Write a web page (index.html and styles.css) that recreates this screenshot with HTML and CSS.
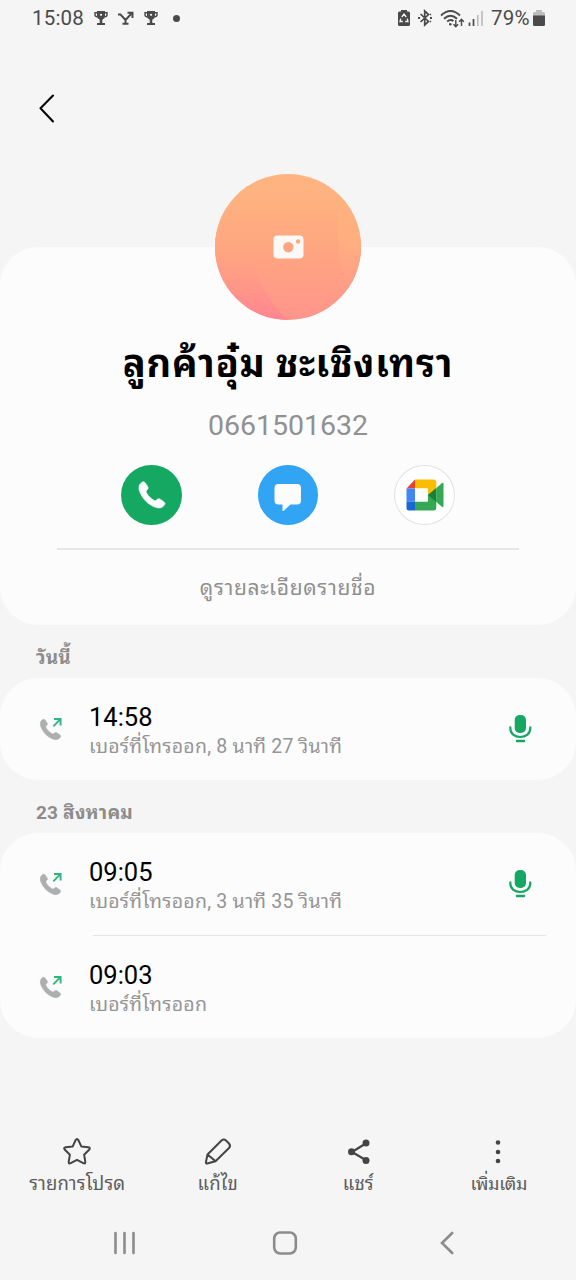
FILE: index.html
```html
<!DOCTYPE html>
<html lang="th">
<head>
<meta charset="utf-8">
<title>ลูกค้าอุ๋ม ชะเชิงเทรา</title>
<link rel="stylesheet" href="styles.css">
</head>
<body>
<svg class="defs" aria-hidden="true">
  <symbol id="trophy" viewBox="0 0 14 16">
    <path d="M3 1h8v5.500q0 2-2.700 3.300V13H11v2H3v-2h2.700V9.800Q3 8.500 3 6.500z" fill="#4a4a4a"/>
    <path d="M3 2.800H1V5q0 1.600 2.500 2M11 2.800h2V5q0 1.600-2.500 2" fill="none" stroke="#4a4a4a" stroke-width="1.400"/>
    <circle cx="7" cy="4.800" r="1.100" fill="#f5f5f5"/>
  </symbol>
  <symbol id="handset" viewBox="0 0 28 28">
    <path d="M2.900 2.200C4.700.300 6.200.500 7.300 2.100l2.200 3.200c1 1.500.700 2.600-.500 3.700-1 1-1.200 1.700-.400 3.100 1.500 2.800 4.300 5.600 7.200 7.200 1.300.700 2 .500 3-.500 1.100-1.200 2.200-1.400 3.700-.400l3.200 2.300c1.700 1.100 1.700 2.500-.100 4.200-2.400 2.300-5.200 2.700-9.400.900C9.500 22.800 5 18.200 2.100 11.600.300 7.400.600 4.500 2.900 2.200z" fill="currentColor" stroke="currentColor" stroke-width="0.700"/>
  </symbol>
  <symbol id="outgoing" viewBox="0 0 24 24">
    <use href="#handset" x="0.500" y="1.500" width="22" height="22" color="#acaeaf"/>
    <path d="M14.300 9.300 21.400 2.200M15 2h6.600v6.600" fill="none" stroke="#2fb67f" stroke-width="1.900"/>
  </symbol>
  <symbol id="mic" viewBox="0 0 24 30">
    <rect x="6.700" y="1" width="11.300" height="18" rx="5" fill="#15a862"/>
    <path d="M2.300 13.300v1c0 5.200 4.300 8.700 10 8.700s10-3.500 10-8.700v-1" fill="none" stroke="#15a862" stroke-width="2.200" stroke-linecap="round"/>
    <path d="M9 27h7" stroke="#15a862" stroke-width="2.500" stroke-linecap="round"/>
  </symbol>
</svg>

<div class="screen">
  <header class="status">
    <span class="clock">15:08</span>
    <svg class="trophy" width="14" height="16"><use href="#trophy"/></svg>
    <svg class="missed" width="18" height="16" viewBox="0 0 18 16"><path d="M1 4.500h2.500L8.500 10 15 3M10.500 2.800H15.500V8M8.500 10v3.300M5.500 13.800h6" fill="none" stroke="#4a4a4a" stroke-width="1.900"/></svg>
    <svg class="trophy" width="14" height="16"><use href="#trophy"/></svg>
    <span class="dot"></span>
    <div class="system">
      <svg width="14" height="18" viewBox="0 0 14 18"><path d="M4 1h6v1.500h1.500Q13 2.500 13 4v11.500q0 1.500-1.500 1.500h-9Q1 17 1 15.500V4q0-1.500 1.500-1.500H4z" fill="#4a4a4a"/><path d="M4.800 8 7 5l2.200 3M10.300 9.600l.7 2.900H8.200M5.800 12.500H3l.8-2.900" fill="none" stroke="#f5f5f5" stroke-width="1.300"/></svg>
      <svg class="bt" width="16" height="18" viewBox="0 0 16 18"><path d="m3.500 5 8 7.500L7.700 16V2l3.800 3.500-8 7.500" fill="none" stroke="#4a4a4a" stroke-width="1.700"/><path d="M1 9h2M13 9h2M13 5.800l1-.500M13 12.200l1 .500" stroke="#4a4a4a" stroke-width="1.800"/></svg>
      <svg class="wifi" width="25" height="19" viewBox="0 0 25 19"><path d="M1 6.500Q10.500-2.500 20 6.500M4 9.800Q10.500 3.500 17 9.800M7.200 12.500q3.300-2.800 6.300-.4" fill="none" stroke="#4a4a4a" stroke-width="1.900"/><circle cx="10.300" cy="15.200" r="1.300" fill="#4a4a4a"/><path d="M15.800 11v6.500M13.500 15.200l2.300 2.500 2.300-2.500M21.500 17v-6.500M19.200 12.800l2.300-2.500 2.300 2.500" fill="none" stroke="#4a4a4a" stroke-width="1.400"/></svg>
      <svg class="signal" width="16" height="17" viewBox="0 0 16 17"><path d="M1.500 12.500V16M5.500 9v7" stroke="#4a4a4a" stroke-width="1.700"/><path d="M9.800 5v11M14 1v15" stroke="#bdbdbd" stroke-width="1.700"/></svg>
      <span class="percent">79%</span>
      <svg class="batt" width="12" height="17" viewBox="0 0 12 17"><path d="M3 0h6v2h1.500Q12 2 12 3.500V6H0V3.500Q0 2 1.500 2H3z" fill="#bdbdbd"/><path d="M0 5.500h12v9q0 1.500-1.500 1.500h-9Q0 16 0 14.500z" fill="#4a4a4a"/></svg>
    </div>
  </header>

  <nav class="appbar">
    <svg width="18" height="30" viewBox="0 0 18 30"><path d="M15 2.500 2.500 15.300 15 28.500" fill="none" stroke="#080808" stroke-width="2.100" stroke-linecap="round" stroke-linejoin="round"/></svg>
  </nav>

  <section class="card profile">
    <svg class="avatar" width="146" height="146" viewBox="0 0 146 146">
      <defs>
        <linearGradient id="sunset" x1="0" y1="0" x2="0" y2="1"><stop offset=".12" stop-color="#ffb380"/><stop offset=".55" stop-color="#ffa481"/><stop offset="1" stop-color="#ff958c"/></linearGradient>
        <linearGradient id="rose" x1="0" y1="0" x2="0" y2="1"><stop offset=".12" stop-color="#ffb380"/><stop offset=".55" stop-color="#ffa481"/><stop offset=".78" stop-color="#ff9688"/><stop offset="1" stop-color="#ff8592"/></linearGradient>
        <linearGradient id="amber" x1="0" y1="0" x2="0" y2="1"><stop offset="0" stop-color="#ffb27e"/><stop offset=".5" stop-color="#ffae80"/><stop offset="1" stop-color="#ff9c87"/></linearGradient>
        <clipPath id="disc"><circle cx="73" cy="73" r="73"/></clipPath>
      </defs>
      <g clip-path="url(#disc)">
        <rect width="146" height="146" fill="url(#sunset)"/>
        <path d="M0 0h34C25 54 35 112 73 146H0z" fill="url(#rose)"/>
        <path d="M123 20q-3 58 9 96h14V20z" fill="url(#amber)"/>
      </g>
      <path fill-rule="evenodd" d="M62.500 61.500h22q4 0 4 4v15q0 4-4 4h-22q-4 0-4-4v-15q0-4 4-4zM73.300 68a5.200 5.200 0 1 0 .01 0zM83 65.300a2.200 2.200 0 1 0 .01 0z" fill="#fdf9f7"/>
    </svg>
    <h1 class="name">ลูกค้าอุ๋ม ชะเชิงเทรา</h1>
    <p class="number">0661501632</p>
    <div class="actions">
      <span class="round call"><svg width="28" height="28"><use href="#handset"/></svg></span>
      <span class="round message"><svg width="28" height="28" viewBox="0 0 28 28"><path d="M4.500 1h18.500q4 0 4 4v12.500q0 4-4 4h-6.500L9.500 28q-1 .6-1-.6v-5.900h-4q-4 0-4-4V5q0-4 4-4z" fill="#fcfcfc"/></svg></span>
      <span class="round meet"><svg width="38" height="32" viewBox="0 0 38 32">
        <path d="M9 .500v9H.500z" fill="#e94235"/><path d="M.500 9.500H9V22.500H.500z" fill="#4285f4"/><path d="M.500 22.500H9V31.500H3q-2.500 0-2.500-2.500z" fill="#1967d2"/>
        <path d="M9 .500h18.500q2.800 0 2.800 2.800v7L21.800 16V9.500H9z" fill="#fbbc04"/><path d="M9 22.500h12.800V16l8.500-5.500v18.200q0 2.800-2.800 2.800H9z" fill="#34a853"/>
        <path d="m21.800 16 8.500-7v14z" fill="#188038"/><path d="m30.300 9 5.600-4.700q1.600-1.200 1.600.700v22q0 1.900-1.600.7L30.300 23z" fill="#34a853"/><path d="M9 9.500h12.800v13H9z" fill="#fff"/>
      </svg></span>
    </div>
    <a class="details">ดูรายละเอียดรายชื่อ</a>
  </section>

  <h2 class="day">วันนี้</h2>
  <section class="card">
    <div class="row">
      <svg class="kind" width="24" height="24"><use href="#outgoing"/></svg>
      <div class="info"><p class="time">14:58</p><p class="desc">เบอร์ที่โทรออก, 8 นาที 27 วินาที</p></div>
      <svg class="mic" width="24" height="30"><use href="#mic"/></svg>
    </div>
  </section>

  <h2 class="day">23 สิงหาคม</h2>
  <section class="card">
    <div class="row">
      <svg class="kind" width="24" height="24"><use href="#outgoing"/></svg>
      <div class="info"><p class="time">09:05</p><p class="desc">เบอร์ที่โทรออก, 3 นาที 35 วินาที</p></div>
      <svg class="mic" width="24" height="30"><use href="#mic"/></svg>
    </div>
    <hr class="rule">
    <div class="row">
      <svg class="kind" width="24" height="24"><use href="#outgoing"/></svg>
      <div class="info"><p class="time">09:03</p><p class="desc">เบอร์ที่โทรออก</p></div>
    </div>
  </section>

  <footer class="tools">
    <div class="tool"><svg width="30" height="30" viewBox="0 0 30 30"><path d="M13.700 3q1.300-2.200 2.600 0l3 6.400 6.900.9q2.800.5.900 2.400l-5 5 1.200 7q.3 2.700-2 1.500L15 22.800l-6.300 3.400q-2.300 1.200-2-1.500l1.200-7-5-5q-1.900-1.900.9-2.400l6.900-.9z" fill="none" stroke="#444" stroke-width="2" stroke-linejoin="round"/></svg><span>รายการโปรด</span></div>
    <div class="tool"><svg width="30" height="30" viewBox="0 0 30 30"><path d="M4.500 17.500 18.500 3.500q2.300-2 4.500 0l3 3q2 2.300 0 4.500L12.500 24.200 4.200 26.500q-1.500.2-1.300-1.300zM4.500 17.500l7.800 6.500" fill="none" stroke="#444" stroke-width="2" stroke-linejoin="round"/></svg><span>แก้ไข</span></div>
    <div class="tool"><svg width="30" height="30" viewBox="0 0 30 30"><path d="M23.500 6 9 15l14.500 8.500" fill="none" stroke="#444" stroke-width="2.200"/><g fill="#444"><circle cx="23" cy="6" r="3.500"/><circle cx="8.500" cy="14.800" r="3.500"/><circle cx="23" cy="23.500" r="3.500"/></g></svg><span>แชร์</span></div>
    <div class="tool more"><svg width="30" height="30" viewBox="0 0 30 30"><g fill="#444"><circle cx="14" cy="5.500" r="2.300"/><circle cx="14" cy="15" r="2.300"/><circle cx="14" cy="24" r="2.300"/></g></svg><span>เพิ่มเติม</span></div>
  </footer>

  <nav class="system-nav">
    <svg width="24" height="24" viewBox="0 0 24 24"><path d="M3.500 2v20M12.500 2v20M21.500 2v20" stroke="#8c8c8c" stroke-width="2.600" stroke-linecap="round"/></svg>
    <svg class="home" width="26" height="26" viewBox="0 0 26 26"><rect x="2.200" y="2.500" width="21.600" height="21" rx="6" fill="none" stroke="#8c8c8c" stroke-width="2.600"/></svg>
    <svg width="16" height="24" viewBox="0 0 16 24"><path d="M13.200 2 3 12l10.200 10" fill="none" stroke="#8c8c8c" stroke-width="2.600" stroke-linecap="round"/></svg>
  </nav>
</div>
</body>
</html>
```
FILE: styles.css
```css
* { box-sizing: border-box; margin: 0; padding: 0; }
body { background: #f5f5f5; font-family: Roboto, "Noto Sans Thai Looped", "Noto Looped Thai", Loma, Waree, Garuda, Umpush, "Droid Sans Thai", sans-serif; color: #080808; }
svg { display: block; flex: none; }
.defs { position: absolute; width: 0; height: 0; }
.screen { width: 576px; height: 1280px; overflow: hidden; display: flex; flex-direction: column; }

.status { height: 36px; padding: 0 31px 0 32px; display: flex; align-items: center; color: #4a4a4a; flex: none; }
.clock, .percent { font-size: 20.5px; line-height: 36px; white-space: nowrap; }
.clock { width: 62px; letter-spacing: .2px; }
.missed { margin: 0 9px 0 9px; }
.dot { width: 7px; height: 7px; border-radius: 50%; background: #4a4a4a; margin-left: 15px; }
.system { margin-left: auto; display: flex; align-items: center; }
.bt { margin-left: 6px; }
.wifi { margin-left: 7px; }
.signal { margin-left: 3px; }
.percent { margin-left: 7px; width: 41px; letter-spacing: .2px; }
.batt { margin-left: 1px; }

.appbar { height: 211px; padding: 57px 0 0 38px; flex: none; }

.card { background: #fcfcfc; border-radius: 38px; flex: none; }
.profile { height: 378px; display: flex; flex-direction: column; align-items: center; }
.avatar { margin-top: -73px; }
.name { height: 60px; margin-top: 14px; font-size: 38px; line-height: 60px; font-weight: 700; letter-spacing: .8px; color: #000; white-space: nowrap; }
.number { height: 40px; margin-top: 12px; font-size: 28.5px; line-height: 40px; color: #919191; }
.actions { display: flex; gap: 76px; margin-top: 19px; }
.round { width: 60.500px; height: 60px; border-radius: 50%; display: grid; place-items: center; }
.call { background: #15a862; color: #fcfcfc; }
.message { background: #32a4f4; padding-top: 3px; }
.meet { background: #fff; border: 1px solid #e2e2e2; }
.details { width: 462px; margin-top: 23px; border-top: 2px solid #e5e5e5; padding-top: 18px; height: 60px; font-size: 21px; line-height: 40px; letter-spacing: .65px; text-align: center; color: #8f8f8f; }

.day { height: 53px; padding-left: 36px; font-size: 19px; line-height: 66px; font-weight: 700; letter-spacing: .2px; color: #8c8c8c; flex: none; }
.row { height: 102px; display: flex; align-items: center; padding: 0 44px 0 39px; }
.info { flex: 1; padding: 6px 0 0 26px; }
.time { font-size: 25.500px; line-height: 30px; color: #000; }
.desc { font-size: 19.500px; line-height: 30px; letter-spacing: .22px; color: #959595; white-space: nowrap; }
.rule { border: 0; height: 1px; background: #e5e5e5; margin: 0 30px 0 93px; }

.tools { margin-top: 99px; padding: 0 7px; display: grid; grid-template-columns: repeat(4, 1fr); flex: none; }
.tool { display: flex; flex-direction: column; align-items: center; color: #5c5c5c; font-size: 18.500px; line-height: 34px; letter-spacing: .15px; white-space: nowrap; }
.more { font-size: 18px; letter-spacing: -.4px; }

.system-nav { margin-top: 29px; padding: 0 121px 0 112px; display: flex; align-items: center; justify-content: space-between; }
.home { margin-right: 6px; }
```
